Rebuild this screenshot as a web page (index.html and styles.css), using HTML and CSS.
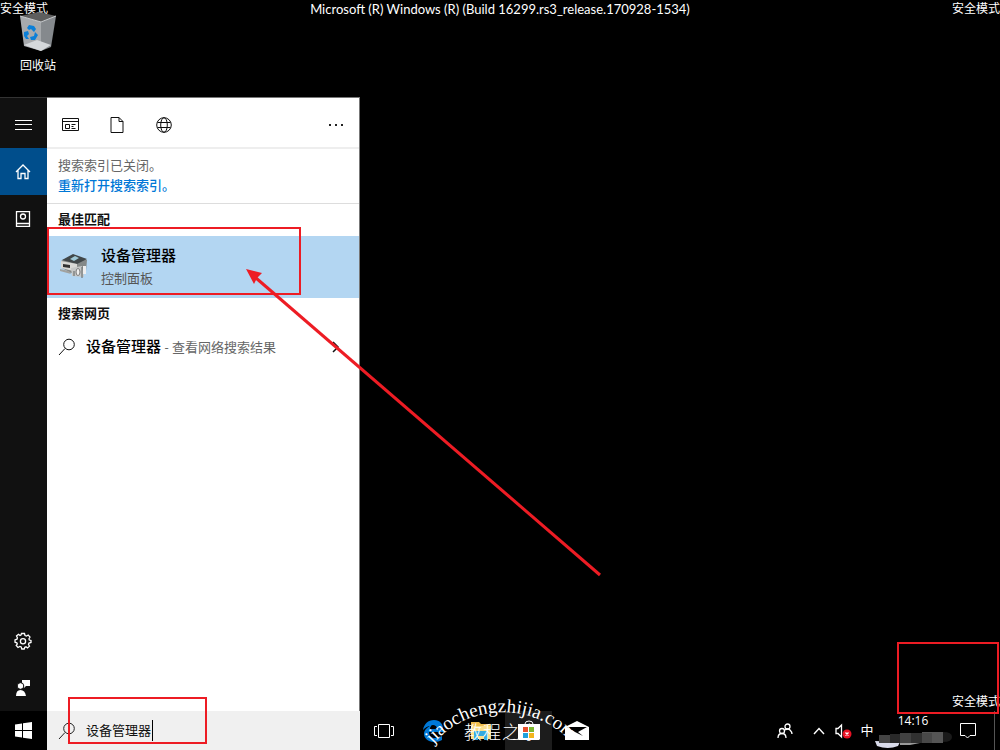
FILE: index.html
```html
<!DOCTYPE html>
<html lang="zh-CN">
<head>
<meta charset="utf-8">
<meta name="viewport" content="width=device-width, initial-scale=1">
<title>安全模式</title>
<link rel="stylesheet" href="styles.css">
</head>
<body>
<div class="screen">
  <header class="safe-bar">
    <span>安全模式</span>
    <span class="build">Microsoft (R) Windows (R) (Build 16299.rs3_release.170928-1534)</span>
    <span>安全模式</span>
  </header>

  <div class="desktop-icons">
    <a class="bin" href="#">
      <svg width="38" height="40" viewBox="0 0 38 40" aria-hidden="true">
        <path d="M1 4 20 0 37 4 22 10Z" fill="#5e5e5e"/>
        <path d="M1 4 22 10 22 39 5 34Z" fill="#a7aaad"/>
        <path d="M22 10 37 4 32 35 22 39Z" fill="#85898d"/>
        <path d="M5 33 18 28 32 33 22 39Z" fill="#d5d8db"/>
        <path d="M1 4 22 10 37 4" fill="none" stroke="#c9cccf"/>
        <g fill="#0a7fd8"><path d="M8 16 10 13 15 14 17 17 15 20 12 17 10 18Z"/><path d="M16 20 19 23 16 28 12 28 11 25 15 24Z"/><path d="M5 20 9 19 10 22 8 24 10 27 7 27 5 24Z"/></g>
      </svg>
      <span>回收站</span>
    </a>
  </div>

  <main class="start">
    <nav class="rail">
      <button class="rail-btn menu" aria-label="菜单"><svg width="17" height="16" viewBox="0 0 17 16"><path d="M0 3.500H17M0 7.500H17M0 12.500H17"/></svg></button>
      <button class="rail-btn active" aria-label="主页"><svg width="17" height="16" viewBox="0 0 17 16"><path d="M1 8 8 1 15 8M3 6.500V14.500H6V9.500H10V14.500H13V6.500" stroke-width="1.300"/></svg></button>
      <button class="rail-btn" aria-label="笔记本"><svg width="17" height="16" viewBox="0 0 17 16"><path d="M1.500 .5H14.500V15.500H1.500ZM1.500 12.500H14.500" stroke-width="1.300"/><circle cx="8" cy="5.500" r="2.500" stroke-width="1.300"/></svg></button>
      <span class="spacer"></span>
      <button class="rail-btn" aria-label="设置"><svg width="19" height="18" viewBox="0 0 19 18"><path stroke-width="1.300" d="M7.500 1.500H10.500L11 3.500 12.500 4 14.200 3 16 5 15 6.800 15.300 8 17 8.500V10.500L15 11 14.500 12.500 15.500 14.200 13.500 16 12 14.800 10.800 15.200 10.200 17H7.800L7.200 15 5.800 14.500 4 15.500 2.200 13.500 3.300 12 2.800 10.800 1 10.200V8L3 7.200 3.400 5.800 2.500 4 4.500 2.300 6 3.500 7 3Z"/><circle cx="9" cy="9.200" r="2.600" stroke-width="1.300"/></svg></button>
      <button class="rail-btn" aria-label="反馈"><svg width="17" height="18" viewBox="0 0 17 18"><g fill="#fff" stroke="none"><path d="M7 1H15V7H11L9 9V6H7Z"/><circle cx="5.500" cy="7" r="3.300" stroke="#111"/><path d="M1 17Q1 11 5.500 11 10 11 11 17Z"/></g></svg></button>
    </nav>

    <section class="results">
      <div class="filters">
        <button aria-label="应用"><svg width="17" height="16" viewBox="0 0 17 16"><path d="M.5 1.500H16.500V13.500H.5ZM.5 4.500H16.500M3.500 7.500H7.500V11.500H3.500ZM9.500 7.500H13.500M9.500 9.500H11.500M9.500 11.500H13.500"/></svg></button>
        <button aria-label="文档"><svg width="15" height="16" viewBox="0 0 15 16"><path d="M1 .5H9L13 4.500V15.500H1ZM9 .5V4.500H13"/></svg></button>
        <button aria-label="网页"><svg width="17" height="16" viewBox="0 0 17 16"><circle cx="8" cy="8" r="7.300"/><ellipse cx="8" cy="8" rx="3.300" ry="7.300"/><path d="M1.500 5.500H14.500M1.500 10.500H14.500"/></svg></button>
        <button class="more" aria-label="更多"><svg width="16" height="4" viewBox="0 0 16 4"><path fill="#222" stroke="none" d="M1 1h2v2H1zM7 1h2v2H7zM13 1h2v2h-2z"/></svg></button>
      </div>
      <div class="notice">
        <span>搜索索引已关闭。</span>
        <a href="#">重新打开搜索索引。</a>
      </div>
      <h2>最佳匹配</h2>
      <a class="best" href="#">
        <svg width="30" height="28" viewBox="0 0 30 28" aria-hidden="true">
          <path d="M2 8 14 2 28 7 27 18 12 20 3 15Z" fill="#858988"/>
          <path d="M3 7 14 1 28 6 18 11Z" fill="#414749"/>
          <path d="M11 6 16 3 20 5 15 8Z" fill="#9fc8d6"/>
          <path d="M2 8 18 11V19L2 15Z" fill="#d9d9d6"/>
          <path d="M4 11 11 12V15L4 14Z" fill="#333"/>
          <path d="M1 16 10 18 12 21 1 18Z" fill="#a2a29f"/>
          <path d="M12 15 23 13 25 24 13 23Z" fill="#c6c8c7"/>
          <path d="M15 18V23M23 14V25" stroke="#5f6363"/>
          <ellipse cx="19" cy="19" rx="2" ry="3.500" fill="#eee" stroke="#777"/>
          <path d="M24 13H27V21H24Z" fill="#eee"/>
        </svg>
        <span class="best-text"><strong>设备管理器</strong><span>控制面板</span></span>
      </a>
      <h2>搜索网页</h2>
      <a class="web" href="#">
        <svg width="18" height="18" viewBox="0 0 18 18"><circle cx="11" cy="6.500" r="5.300"/><path d="M7 10.500 1 17"/></svg>
        <span class="web-text"><b>设备管理器</b> <span>- 查看网络搜索结果</span></span>
        <svg width="8" height="12" viewBox="0 0 8 12"><path d="M1 1 6 6 1 11" stroke-width="1.500"/></svg>
      </a>
    </section>
  </main>

  <footer class="taskbar">
    <button class="win" aria-label="开始"><svg width="17" height="17" viewBox="0 0 17 17"><path fill="#fff" stroke="none" d="M0 2.500 7 1.500V8H0ZM8 1.300 17 0V8H8ZM0 9H7V15.500L0 14.500ZM8 9H17V17L8 15.700Z"/></svg></button>
    <label class="search">
      <svg width="18" height="18" viewBox="0 0 18 18"><circle cx="11" cy="6.500" r="5.300"/><path d="M7 10.500 1 17"/></svg>
      <input type="text" value="设备管理器" aria-label="搜索"><span class="caret"></span>
    </label>
    <div class="apps">
      <button class="task" aria-label="任务视图"><svg width="20" height="14" viewBox="0 0 20 14"><path d="M4.500 .5H15.500V13.500H4.500ZM3 2.500H.5V11.500H3M17 2.500H19.500V11.500H17"/></svg></button>
      <button aria-label="Edge"><svg width="20" height="22" viewBox="0 0 20 22"><path fill="#0078d7" stroke="none" d="M0 10C1 4 5 0 11 0 17 0 20 4 20 9V12H6C6 16 9 18 12 18 15 18 17 17 19 16V20C17 21 14 22 11 22 5 22 1 18 1 14 1 10 4 7 8 6 4 6 2 8 0 10ZM7 9H14C14 6 12 5 10 5 8 5 7 7 7 9Z"/></svg></button>
      <button aria-label="文件资源管理器"><svg width="22" height="20" viewBox="0 0 22 20"><g stroke="none"><path fill="#efbd4d" d="M1 1H9L11 3H21V18H1Z"/><path fill="#fbdf8d" d="M1 5H21V18H1Z"/><path fill="#32aadf" d="M4 10H18V19H14V15H8V19H4Z"/></g></svg></button>
      <button class="store" aria-label="应用商店"><svg width="22" height="21" viewBox="0 0 22 21"><g stroke="none"><path fill="#fff" d="M0 4H22V19L21 20H1L0 19Z"/><path fill="#e8502c" d="M5 7H10V12H5Z"/><path fill="#7db72f" d="M11 7H16V12H11Z"/><path fill="#20a0dc" d="M5 13H10V18H5Z"/><path fill="#f2b51d" d="M11 13H16V18H11Z"/></g><path d="M7 4Q7 1 11 1 15 1 15 4"/></svg></button>
      <button aria-label="邮件"><svg width="24" height="20" viewBox="0 0 24 20"><path fill="#fff" stroke="none" d="M0 6 12 0 24 6V19H0Z"/><path fill="#000" stroke="none" d="M2 6H22L13 11 18 15 10 11Z"/></svg></button>
    </div>
    <div class="tray">
      <button aria-label="人脉"><svg width="16" height="16" viewBox="0 0 16 16"><g stroke-width="1.300"><circle cx="10.500" cy="3.500" r="2.500"/><circle cx="5" cy="8" r="2.500"/><path d="M1 15Q1 10.500 5 10.500 9 10.500 9 15M8 7Q11 5 13 7 15 9 15 11"/></g></svg></button>
      <button class="chev" aria-label="显示隐藏的图标"><svg width="12" height="8" viewBox="0 0 12 8"><path d="M1 7 6 1.500 11 7" stroke-width="1.400"/></svg></button>
      <button aria-label="音量"><svg width="17" height="16" viewBox="0 0 17 16"><path stroke-width="1.300" d="M1 5.500H3L6.500 2V14L3 10.500H1Z"/><circle cx="12" cy="11" r="4.500" fill="#e81123" stroke="none"/><path d="M10.500 9.500 13.500 12.500M13.500 9.500 10.500 12.500" stroke-width="1.300"/></svg></button>
      <button class="ime" aria-label="输入法">中</button>
      <div class="clock">
        <time>14:16</time>
        <svg width="78" height="18" viewBox="0 0 78 18" aria-hidden="true"><g stroke="none"><path fill="#d9dbea" d="M1 10 26 11 24 15Q14 19 3 15Z"/><path fill="#444" d="M5 4H16V12H5Z"/><path fill="#292929" d="M16 3H26V12H16Z"/><path fill="#414141" d="M26 2H37V12H26Z"/><path fill="#303030" d="M37 2H48V12H37Z"/><path fill="#555" d="M48 1H69V12H48Z"/><path fill="#484848" d="M48 2H58V12H48Z"/><path fill="#1a1a1a" d="M69 1Q78 1 78 6 78 11 69 11Z"/><path fill="#999" d="M26 12H46L36 14H26Z"/></g></svg>
      </div>
      <button class="notes" aria-label="通知"><svg width="16" height="16" viewBox="0 0 16 16"><path d="M.5 .5H15.500V12.500H10L7.500 15 5 12.500H.5Z"/></svg></button>
      <button class="peek" aria-label="显示桌面"></button>
    </div>
  </footer>

  <span class="safe-corner">安全模式</span>

  <svg class="watermark" width="160" height="56" viewBox="0 0 160 56">
    <path id="arc" d="M12 50A93 93 0 0 1 152 50" fill="none"/>
    <text class="wm-latin"><textPath href="#arc">jiaochengzhijia.com</textPath></text>
    <text class="wm-han" x="43 62 81 100" y="45">教程之家</text>
  </svg>

  <div class="mark mark-result"></div>
  <div class="mark mark-search"></div>
  <div class="mark mark-corner"></div>
  <svg class="arrow" width="360" height="312" viewBox="0 0 360 312" aria-hidden="true"><path d="M355 307 11 10" stroke="#ed1c24" stroke-width="3"/><path d="M1 1 17 5 12 10 9 16Z" fill="#ed1c24"/></svg>
</div>
</body>
</html>
```

FILE: styles.css
```css
* { box-sizing: border-box; }
body {
  margin: 0;
  background: #000;
  color: #fff;
  font-family: "Open Sans", "Noto Sans CJK SC", sans-serif;
  font-size: 12px;
}
a { color: inherit; text-decoration: none; }
button {
  display: flex;
  align-items: center;
  justify-content: center;
  padding: 0;
  border: 0;
  background: none;
  color: inherit;
  font: inherit;
}
svg { display: block; flex: none; fill: none; stroke: currentColor; }
.screen {
  position: relative;
  display: flex;
  flex-direction: column;
  min-height: 100vh;
  overflow: hidden;
}
.safe-bar {
  display: flex;
  justify-content: space-between;
  height: 12px;
  line-height: 18px;
}
.build { font-family: Lato, sans-serif; font-size: 13px; }
.desktop-icons { height: 85px; }
.bin {
  display: flex;
  flex-direction: column;
  align-items: center;
  gap: 5px;
  width: 76px;
  line-height: 18px;
}
.bin svg { stroke: none; }

.start { display: flex; flex: 1; width: 360px; }
.rail {
  display: flex;
  flex-direction: column;
  width: 47px;
  border-top: 1px solid #333;
  background: #111;
}
.rail-btn { height: 47px; }
.menu { height: 50px; padding-top: 4px; }
.active { background: #004e8c; }
.spacer { flex: 1; }
.results {
  flex: 1;
  border-top: 1px solid #777;
  border-right: 1px solid #777;
  background: #fff;
  color: #111;
}
.filters {
  display: flex;
  align-items: center;
  height: 51px;
  padding: 4px 15px 0 0;
  border-bottom: 2px solid #eee;
}
.filters button { width: 47px; height: 46px; }
.filters .more { width: 16px; margin-left: auto; }
.notice {
  display: flex;
  flex-direction: column;
  height: 55px;
  padding: 6px 11px;
  border-bottom: 1px solid #ddd;
  color: #666;
  font-size: 13px;
  line-height: 20px;
}
.notice a { color: #0078d7; font-weight: 500; }
h2 {
  margin: 0;
  padding-left: 11px;
  padding-bottom: 2px;
  font-size: 13px;
  line-height: 30px;
}
.best {
  display: flex;
  align-items: center;
  gap: 12px;
  height: 62px;
  padding-left: 12px;
  background: #b3d6f2;
}
.best svg { stroke: none; }
.best-text { display: flex; flex-direction: column; line-height: 23px; }
.best-text strong { font-size: 15px; font-weight: 500; color: #000; }
.best-text span { font-size: 13px; color: #555; }
.web {
  display: flex;
  align-items: center;
  gap: 10px;
  height: 34px;
  padding: 0 19px 0 11px;
}
.web-text { flex: 1; color: #666; font-size: 13px; line-height: 20px; padding-bottom: 2px; }
.web-text b { color: #000; font-size: 15px; font-weight: 500; }

.taskbar { display: flex; height: 39px; }
.win { width: 47px; }
.search {
  display: flex;
  align-items: center;
  width: 313px;
  padding-left: 11px;
  background: #f0f0f0;
  color: #222;
}
.search input {
  width: 66px;
  margin-left: 10px;
  padding: 0 0 2px;
  border: 0;
  outline: 0;
  background: none;
  color: #111;
  font: inherit;
  font-size: 13px;
}
.caret { width: 1px; height: 21px; background: #000; }
.apps { display: flex; gap: 1px; }
.apps button { width: 47px; }
.apps .task { width: 48px; }
.apps .store { background: #1c1c1c; }
.store svg { position: relative; z-index: 2; }
.tray { display: flex; margin-left: auto; }
.tray button { width: 24px; }
.tray .chev { margin-left: 10px; }
.tray .ime { padding-bottom: 2px; font-size: 13px; }
.clock {
  display: flex;
  flex-direction: column;
  align-items: center;
  width: 68px;
}
.clock time { line-height: 20px; }
.clock svg { stroke: none; }
.tray .notes { width: 41px; }
.tray .peek { width: 6px; margin-left: 6px; border-left: 1px solid #555; }

.safe-corner { position: absolute; right: 0; bottom: 40px; line-height: 16px; }
.watermark { position: absolute; left: 421px; bottom: 0; z-index: 1; stroke: none; fill: #fff; overflow: visible; }
.wm-latin { font-family: "Liberation Serif", serif; font-size: 19px; }
.wm-han { font-family: "Noto Sans CJK SC", sans-serif; font-size: 18px; font-weight: 300; }
.mark { position: absolute; z-index: 3; border: 2px solid #ed1c24; }
.mark-result { left: 47px; top: 227px; width: 254px; height: 68px; }
.mark-search { left: 68px; bottom: 6px; width: 139px; height: 47px; }
.mark-corner { right: 1px; bottom: 36px; width: 102px; height: 72px; }
.arrow { position: absolute; left: 245px; top: 268px; z-index: 3; stroke: none; }
```
